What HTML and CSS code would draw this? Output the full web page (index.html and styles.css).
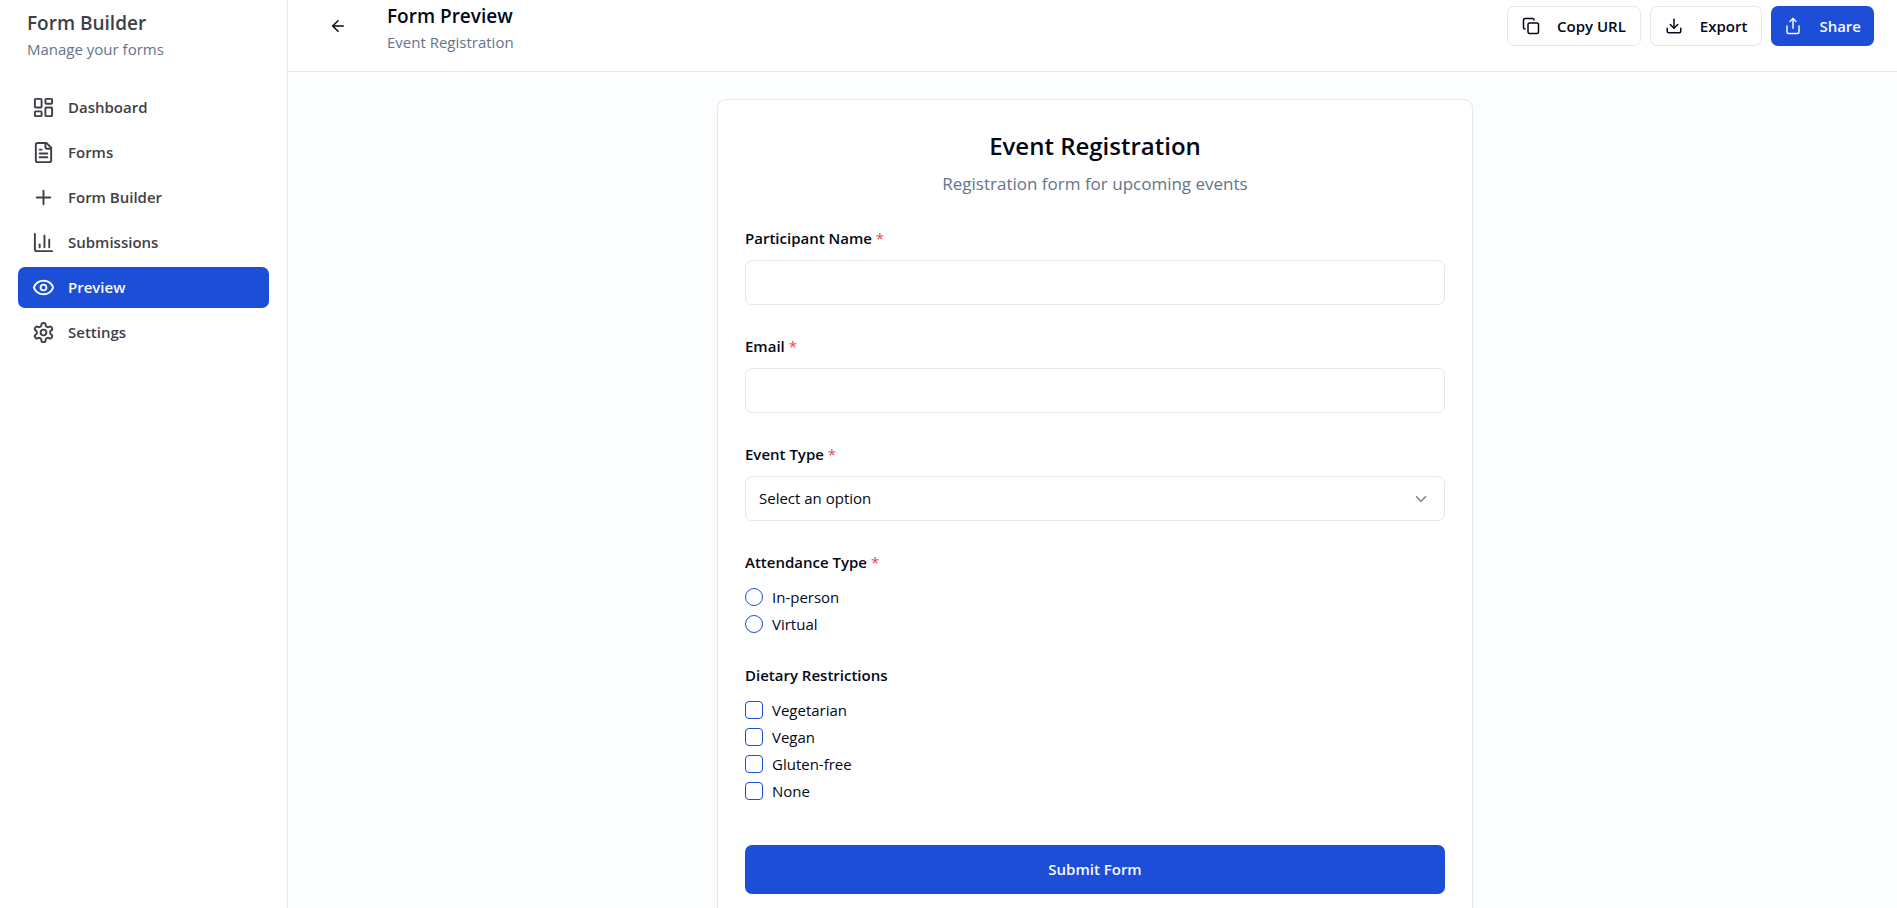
FILE: index.html
```html
<!DOCTYPE html>
<html lang="en">
<head>
<meta charset="utf-8">
<meta name="viewport" content="width=device-width, initial-scale=1">
<title>Form Preview</title>
<link rel="stylesheet" href="styles.css">
</head>
<body>
<div class="shell">
  <aside class="sidebar">
    <div class="brand">
      <h1 class="heading">Form Builder</h1>
      <p class="subheading">Manage your forms</p>
    </div>
    <nav class="nav">
      <a class="nav-link" href="#dashboard"><svg class="icon-lg" viewBox="0 0 24 24"><rect width="7" height="9" x="3" y="3" rx="1"/><rect width="7" height="5" x="14" y="3" rx="1"/><rect width="7" height="9" x="14" y="12" rx="1"/><rect width="7" height="5" x="3" y="16" rx="1"/></svg>Dashboard</a>
      <a class="nav-link" href="#forms"><svg class="icon-lg" viewBox="0 0 24 24"><path d="M15 2H6a2 2 0 0 0-2 2v16a2 2 0 0 0 2 2h12a2 2 0 0 0 2-2V7Z"/><path d="M14 2v4a2 2 0 0 0 2 2h4"/><path d="M10 9H8"/><path d="M16 13H8"/><path d="M16 17H8"/></svg>Forms</a>
      <a class="nav-link" href="#builder"><svg class="icon-lg" viewBox="0 0 24 24"><path d="M5 12h14"/><path d="M12 5v14"/></svg>Form Builder</a>
      <a class="nav-link" href="#submissions"><svg class="icon-lg" viewBox="0 0 24 24"><path d="M3 3v16a2 2 0 0 0 2 2h16"/><path d="M18 17V9"/><path d="M13 17V5"/><path d="M8 17v-3"/></svg>Submissions</a>
      <a class="nav-link nav-link-active" href="#preview" aria-current="page"><svg class="icon-lg" viewBox="0 0 24 24"><path d="M2.062 12.348a1 1 0 0 1 0-.696 10.75 10.75 0 0 1 19.876 0 1 1 0 0 1 0 .696 10.75 10.75 0 0 1-19.876 0"/><circle cx="12" cy="12" r="3"/></svg>Preview</a>
      <a class="nav-link" href="#settings"><svg class="icon-lg" viewBox="0 0 24 24"><path d="M12.22 2h-.44a2 2 0 0 0-2 2v.18a2 2 0 0 1-1 1.73l-.43.25a2 2 0 0 1-2 0l-.15-.08a2 2 0 0 0-2.73.73l-.22.38a2 2 0 0 0 .73 2.73l.15.1a2 2 0 0 1 1 1.72v.51a2 2 0 0 1-1 1.74l-.15.09a2 2 0 0 0-.73 2.73l.22.38a2 2 0 0 0 2.73.73l.15-.08a2 2 0 0 1 2 0l.43.25a2 2 0 0 1 1 1.73V20a2 2 0 0 0 2 2h.44a2 2 0 0 0 2-2v-.18a2 2 0 0 1 1-1.73l.43-.25a2 2 0 0 1 2 0l.15.08a2 2 0 0 0 2.73-.73l.22-.39a2 2 0 0 0-.73-2.73l-.15-.08a2 2 0 0 1-1-1.74v-.5a2 2 0 0 1 1-1.74l.15-.09a2 2 0 0 0 .73-2.73l-.22-.38a2 2 0 0 0-2.73-.73l-.15.08a2 2 0 0 1-2 0l-.43-.25a2 2 0 0 1-1-1.73V4a2 2 0 0 0-2-2z"/><circle cx="12" cy="12" r="3"/></svg>Settings</a>
    </nav>
  </aside>

  <div class="page">
    <header class="topbar">
      <button class="back" type="button" aria-label="Back"><svg class="icon" viewBox="0 0 24 24"><path d="m12 19-7-7 7-7"/><path d="M19 12H5"/></svg></button>
      <div class="titles">
        <h2 class="heading heading-dark">Form Preview</h2>
        <p class="subheading">Event Registration</p>
      </div>
      <div class="actions">
        <button class="btn" type="button"><svg class="icon" viewBox="0 0 24 24"><rect width="14" height="14" x="8" y="8" rx="2" ry="2"/><path d="M4 16c-1.1 0-2-.9-2-2V4c0-1.100.9-2 2-2h10c1.100 0 2 .9 2 2"/></svg>Copy URL</button>
        <button class="btn" type="button"><svg class="icon" viewBox="0 0 24 24"><path d="M21 15v4a2 2 0 0 1-2 2H5a2 2 0 0 1-2-2v-4"/><path d="m7 10 5 5 5-5"/><path d="M12 15V3"/></svg>Export</button>
        <button class="btn btn-primary" type="button"><svg class="icon" viewBox="0 0 24 24"><path d="M4 12v8a2 2 0 0 0 2 2h12a2 2 0 0 0 2-2v-8"/><path d="m16 6-4-4-4 4"/><path d="M12 2v13"/></svg>Share</button>
      </div>
    </header>

    <main class="content">
      <form class="card">
        <div class="card-head">
          <h3 class="card-title">Event Registration</h3>
          <p class="card-text">Registration form for upcoming events</p>
        </div>
        <div class="fields">
          <div class="field">
            <label class="label" for="name">Participant Name <span class="required">*</span></label>
            <input class="control" id="name" type="text">
          </div>
          <div class="field">
            <label class="label" for="email">Email <span class="required">*</span></label>
            <input class="control" id="email" type="email">
          </div>
          <div class="field">
            <label class="label" for="event-type">Event Type <span class="required">*</span></label>
            <div class="select">
              <select class="control select-control" id="event-type"><option>Select an option</option></select>
              <svg class="icon select-arrow" viewBox="0 0 24 24"><path d="m6 9 6 6 6-6"/></svg>
            </div>
          </div>
          <fieldset class="field field-group">
            <legend class="label">Attendance Type <span class="required">*</span></legend>
            <div class="choices">
              <label class="choice"><input class="tick tick-round" type="radio" name="attendance">In-person</label>
              <label class="choice"><input class="tick tick-round" type="radio" name="attendance">Virtual</label>
            </div>
          </fieldset>
          <fieldset class="field field-group">
            <legend class="label">Dietary Restrictions</legend>
            <div class="choices">
              <label class="choice"><input class="tick" type="checkbox">Vegetarian</label>
              <label class="choice"><input class="tick" type="checkbox">Vegan</label>
              <label class="choice"><input class="tick" type="checkbox">Gluten-free</label>
              <label class="choice"><input class="tick" type="checkbox">None</label>
            </div>
          </fieldset>
        </div>
        <button class="submit" type="submit">Submit Form</button>
      </form>
    </main>
  </div>
</div>
</body>
</html>
```
FILE: styles.css
```css
:root {
  --primary: #1d4ed8;
  --border: #e2e8f0;
  --text: #020817;
  --muted: #64748b;
  --side: #3f3f46;
}

* {
  box-sizing: border-box;
  margin: 0;
}

body {
  font: 400 15px/22px "Open Sans", "Noto Sans", sans-serif;
  color: var(--text);
  background: #fff;
}

button, input, select {
  font: inherit;
  color: inherit;
}

svg {
  flex: none;
  fill: none;
  stroke: currentColor;
  stroke-width: 2;
  stroke-linecap: round;
  stroke-linejoin: round;
}

.icon { width: 18px; height: 18px; }
.icon-lg { width: 23px; height: 23px; }

.shell {
  display: flex;
  height: 100vh;
  overflow: hidden;
}

.sidebar {
  flex: none;
  width: 288px;
  border-right: 1px solid var(--border);
  color: var(--side);
}

.brand { padding: 9px 27px 27px; }

.heading {
  font-size: 19px;
  line-height: 29px;
  font-weight: 600;
}

.heading-dark { color: var(--text); }
.subheading { color: var(--muted); }

.nav {
  display: flex;
  flex-direction: column;
  gap: 4px;
  padding: 0 18px;
}

.nav-link {
  display: flex;
  align-items: center;
  gap: 13px;
  height: 41px;
  padding: 0 14px 1px;
  border-radius: 7px;
  font-weight: 600;
  color: inherit;
  text-decoration: none;
}

.nav-link-active {
  background: var(--primary);
  color: #f8fafc;
}

.page {
  flex: 1;
  min-width: 0;
  display: flex;
  flex-direction: column;
}

.topbar {
  flex: none;
  display: flex;
  align-items: flex-start;
  padding: 2px 23px 17px 27px;
  border-bottom: 1px solid var(--border);
  background: #fff;
}

.back {
  display: flex;
  margin: 4px 26px 0 0;
  padding: 11px 14px;
  border: 0;
  background: none;
}

.titles {
  flex: 1;
  padding-bottom: 1px;
}

.actions {
  display: flex;
  gap: 9px;
  padding-top: 4px;
}

.btn {
  display: flex;
  align-items: center;
  gap: 17px;
  height: 40px;
  padding: 0 14px;
  border: 1px solid var(--border);
  border-radius: 7px;
  background: #fff;
  font-weight: 600;
}

.btn-primary {
  padding: 0 13px;
  border: 0;
  background: var(--primary);
  color: #f8fafc;
}

.content {
  flex: 1;
  min-height: 0;
  overflow-y: auto;
  scrollbar-width: none;
  padding: 27px 23px 27px 28px;
  background: #fbfdff;
}

.card {
  max-width: 756px;
  margin: 0 auto;
  padding: 27px;
  border: 1px solid var(--border);
  border-radius: 9px;
  background: #fff;
}

.card-head {
  margin-bottom: 30px;
  text-align: center;
}

.card-title {
  font-size: 24px;
  line-height: 38px;
  font-weight: 600;
}

.card-text {
  margin-top: 5px;
  font-size: 17px;
  line-height: 27px;
  color: var(--muted);
}

.fields {
  display: flex;
  flex-direction: column;
  gap: 30px;
}

.field {
  display: flex;
  flex-direction: column;
  gap: 11px;
}

.field-group {
  display: block;
  min-width: 0;
  padding: 0;
  border: 0;
}

.label {
  padding: 0;
  font-weight: 600;
}

.required { color: #ef4444; font-weight: 400; }

.control {
  width: 100%;
  height: 45px;
  padding: 0 13px 1px;
  border: 1px solid var(--border);
  border-radius: 7px;
  background: #fff;
}

.select { display: grid; align-items: center; }

.select-control {
  grid-area: 1 / 1;
  appearance: none;
}

.select-arrow {
  grid-area: 1 / 1;
  justify-self: end;
  margin-right: 15px;
  opacity: 0.5;
  pointer-events: none;
}

.choices {
  display: flex;
  flex-direction: column;
  gap: 5px;
  padding-top: 13px;
}

.field-group + .field-group { margin-top: -1px; }

.choice {
  display: flex;
  align-items: center;
  gap: 9px;
}

.tick {
  appearance: none;
  width: 18px;
  height: 18px;
  margin: 0;
  border: 1px solid var(--primary);
  border-radius: 4px;
  background: #fff;
}

.tick-round { border-radius: 50%; }

.submit {
  display: block;
  width: 100%;
  height: 49px;
  margin-top: 43px;
  padding: 0 0 2px;
  border: 0;
  border-radius: 7px;
  background: var(--primary);
  color: #f8fafc;
  font-weight: 600;
}
```
